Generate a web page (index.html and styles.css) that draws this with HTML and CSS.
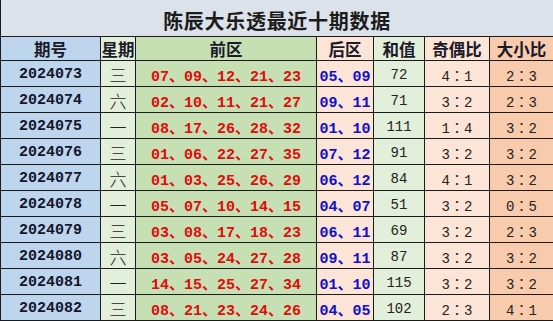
FILE: index.html
```html
<!DOCTYPE html>
<html lang="zh-CN">
<head>
<meta charset="utf-8">
<title>陈辰大乐透最近十期数据</title>
<link rel="stylesheet" href="styles.css">
</head>
<body>
<div class="sheet">
  <div class="title">陈辰大乐透最近十期数据</div>

  <div class="c hd c-id">期号</div>
  <div class="c hd c-wk">星期</div>
  <div class="c hd c-fr">前区</div>
  <div class="c hd c-bk">后区</div>
  <div class="c hd c-sum">和值</div>
  <div class="c hd c-oe">奇偶比</div>
  <div class="c hd c-bs">大小比</div>

  <div class="c c-id id">2024073</div><div class="c c-wk wk">三</div><div class="c c-fr red">07、09、12、21、23</div><div class="c c-bk blue">05、09</div><div class="c c-sum num">72</div><div class="c c-oe num">4：1</div><div class="c c-bs num">2：3</div>
  <div class="c c-id id">2024074</div><div class="c c-wk wk">六</div><div class="c c-fr red">02、10、11、21、27</div><div class="c c-bk blue">09、11</div><div class="c c-sum num">71</div><div class="c c-oe num">3：2</div><div class="c c-bs num">2：3</div>
  <div class="c c-id id">2024075</div><div class="c c-wk wk">一</div><div class="c c-fr red">08、17、26、28、32</div><div class="c c-bk blue">01、10</div><div class="c c-sum num">111</div><div class="c c-oe num">1：4</div><div class="c c-bs num">3：2</div>
  <div class="c c-id id">2024076</div><div class="c c-wk wk">三</div><div class="c c-fr red">01、06、22、27、35</div><div class="c c-bk blue">07、12</div><div class="c c-sum num">91</div><div class="c c-oe num">3：2</div><div class="c c-bs num">3：2</div>
  <div class="c c-id id">2024077</div><div class="c c-wk wk">六</div><div class="c c-fr red">01、03、25、26、29</div><div class="c c-bk blue">06、12</div><div class="c c-sum num">84</div><div class="c c-oe num">4：1</div><div class="c c-bs num">3：2</div>
  <div class="c c-id id">2024078</div><div class="c c-wk wk">一</div><div class="c c-fr red">05、07、10、14、15</div><div class="c c-bk blue">04、07</div><div class="c c-sum num">51</div><div class="c c-oe num">3：2</div><div class="c c-bs num">0：5</div>
  <div class="c c-id id">2024079</div><div class="c c-wk wk">三</div><div class="c c-fr red">03、08、17、18、23</div><div class="c c-bk blue">06、11</div><div class="c c-sum num">69</div><div class="c c-oe num">3：2</div><div class="c c-bs num">2：3</div>
  <div class="c c-id id">2024080</div><div class="c c-wk wk">六</div><div class="c c-fr red">03、05、24、27、28</div><div class="c c-bk blue">09、11</div><div class="c c-sum num">87</div><div class="c c-oe num">3：2</div><div class="c c-bs num">3：2</div>
  <div class="c c-id id">2024081</div><div class="c c-wk wk">一</div><div class="c c-fr red">14、15、25、27、34</div><div class="c c-bk blue">01、10</div><div class="c c-sum num">115</div><div class="c c-oe num">3：2</div><div class="c c-bs num">3：2</div>
  <div class="c c-id id">2024082</div><div class="c c-wk wk">三</div><div class="c c-fr red">08、21、23、24、26</div><div class="c c-bk blue">04、05</div><div class="c c-sum num">102</div><div class="c c-oe num">2：3</div><div class="c c-bs num">4：1</div>
</div>
</body>
</html>
```

FILE: styles.css
```css
html, body {
  margin: 0;
  padding: 0;
  background: #ffffff;
}

.sheet {
  width: 553px;
  height: 321px;
  box-sizing: border-box;
  display: grid;
  grid-template-columns: 99px 34px 180px 56px 50px 64px 63px;
  grid-template-rows: 36px 23px repeat(10, 25px);
  gap: 1px;
  padding: 0 0 1px 1px;
  background: #1b1b1b;
  overflow: hidden;
}

.title {
  grid-column: 1 / -1;
  background: #dbe2ea;
  display: flex;
  align-items: center;
  justify-content: center;
  padding-top: 4px;
  box-sizing: border-box;
  font-family: "Noto Sans CJK SC", sans-serif;
  font-weight: 700;
  font-size: 20px;
  letter-spacing: 0.7px;
  color: #1c1c1c;
}

.c {
  display: flex;
  align-items: center;
  justify-content: center;
  white-space: nowrap;
  padding-top: 2px;
  box-sizing: border-box;
  color: #1a1a2a;
}

.hd {
  font-family: "Noto Sans CJK SC", sans-serif;
  font-weight: 700;
  font-size: 16.5px;
  padding-top: 1px;
}

.c-id { background: #bdd6ee; }
.c-wk { background: #e2efda; }
.c-fr { background: #c6e0b4; }
.c-bk { background: #fce4d6; }
.c-sum { background: #e2efda; }
.c-oe { background: #fce4d6; }
.c-bs { background: #f8cbad; }

.id, .red, .blue {
  font-family: "Liberation Mono", "Noto Sans CJK SC", monospace;
  font-weight: 700;
  font-size: 15px;
}

.id { color: #14142a; }
.red { color: #e00b0b; }
.blue { color: #1010c8; }

.wk {
  font-family: "Noto Sans CJK SC", sans-serif;
  font-weight: 300;
  font-size: 17px;
  color: #222;
}

.num {
  font-family: "Liberation Mono", "Noto Sans CJK TC", monospace;
  font-size: 14px;
  color: #222;
}
```
